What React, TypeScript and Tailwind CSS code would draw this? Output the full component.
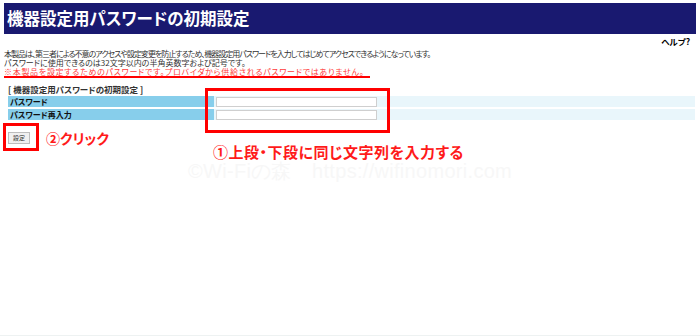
export default function App() {
  return (
    <div className="relative w-[700px] h-[336px] overflow-hidden bg-white font-['Noto_Sans_CJK_JP',sans-serif] [font-feature-settings:'palt'] text-[#333]">
      {/* Header */}
      <div className="px-[4px] pt-[3px]">
        <div className="h-[31px] bg-[#191970] flex items-center pl-[3px]">
          <h1 className="text-white font-bold text-[16.5px] leading-none">機器設定用パスワードの初期設定</h1>
        </div>
      </div>

      <div className="pr-[10px] mt-[2px] h-[10px] text-right text-[8.5px] leading-[10px] font-bold text-black">ヘルプ?</div>

      {/* Description */}
      <div className="px-[4px] mt-[3px] text-[8px] leading-[9px]">
        <p className="tracking-[-1px]">本製品は、第三者による不意のアクセスや設定変更を防止するため、機器設定用パスワードを入力してはじめてアクセスできるようになっています。</p>
        <p>パスワードに使用できるのは32文字以内の半角英数字および記号です。</p>
        <p className="text-[#ff3b3b] tracking-[0.7px]">※本製品を設定するためのパスワードです。プロバイダから供給されるパスワードではありません。</p>
      </div>
      <div className="ml-[4px] w-[366px] h-[2px] bg-[#ff0000]" />

      {/* Form */}
      <div className="ml-[8px] mr-[5px] mt-[6px]">
        <div className="h-[10px] text-[8.5px] leading-[10px] font-bold text-[#333]">[ 機器設定用パスワードの初期設定 ]</div>
        <div className="mt-[2px] flex flex-col gap-[2px]">
          {['パスワード', 'パスワード再入力'].map((label) => (
            <div key={label} className="flex h-[11px]">
              <div className="w-[206px] bg-[#87ceeb] pl-[2px] text-[8px] leading-[11px] font-bold text-[#111]">{label}</div>
              <div className="flex-1 bg-[#e9f6fb] flex items-center pl-[2px]">
                <div className="w-[161px] h-[10px] bg-white border border-[#cfcfcf]" />
              </div>
            </div>
          ))}
        </div>
        <div className="mt-[11px] flex items-center">
          <button className="w-[22px] h-[12px] bg-[#f0f0f0] border border-[#bdbdbd] text-[6px] leading-none text-[#333]">設定</button>
          <span className="ml-[16px] text-[14px] leading-none font-bold text-[#ff1a1a]">②クリック</span>
        </div>
      </div>

      {/* Annotations */}
      <div className="absolute left-[205px] top-[88px] w-[185px] h-[45px] border-[3px] border-[#ff0000]" />
      <div className="absolute left-[3px] top-[123px] w-[36px] h-[28px] border-[3px] border-[#ff0000]" />
      <div className="absolute left-[213px] top-[144px] text-[15px] leading-none font-bold text-[#ff1a1a] tracking-[0.5px]">①上段・下段に同じ文字列を入力する</div>

      {/* Watermark */}
      <div className="absolute left-[188px] top-[161px] text-[20px] leading-none text-[#f7f7f7] tracking-[0.3px] font-['Liberation_Sans',sans-serif]">©Wi-Fiの森　https://wifinomori.com</div>

      <div className="absolute left-0 right-0 bottom-0 h-[1px] bg-[#eef2f2]" />
    </div>
  );
}
